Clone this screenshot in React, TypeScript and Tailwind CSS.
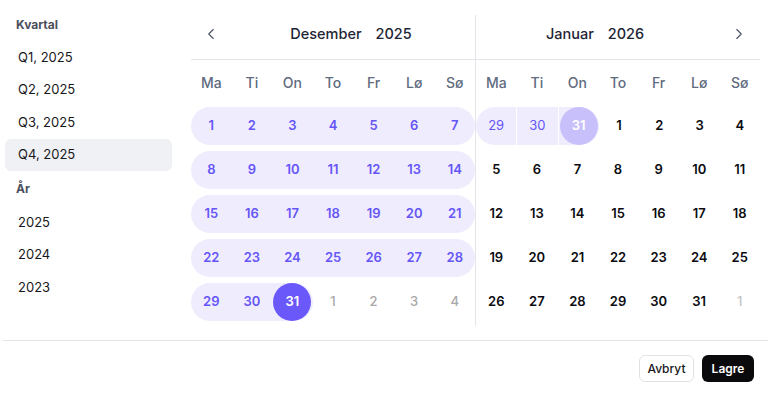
import React from 'react';
import { ChevronLeft, ChevronRight } from 'lucide-react';

const weekdays = ['Ma', 'Ti', 'On', 'To', 'Fr', 'Lø', 'Sø'];

type Day = {
  n: number;
  kind: 'range' | 'end' | 'outsideRange' | 'outsideEnd' | 'normal' | 'muted';
  start?: boolean; // left edge of pill
  stop?: boolean; // right edge of pill
};

// Desember 2025 — selection 1..31
const decDays: Day[][] = (() => {
  const rows: Day[][] = [];
  let d = 1;
  for (let r = 0; r < 4; r++) {
    const row: Day[] = [];
    for (let c = 0; c < 7; c++) {
      row.push({ n: d++, kind: 'range', start: c === 0, stop: c === 6 });
    }
    rows.push(row);
  }
  rows.push([
    { n: 29, kind: 'range', start: true },
    { n: 30, kind: 'range' },
    { n: 31, kind: 'end' },
    { n: 1, kind: 'muted' },
    { n: 2, kind: 'muted' },
    { n: 3, kind: 'muted' },
    { n: 4, kind: 'muted' },
  ]);
  return rows;
})();

// Januar 2026
const janDays: Day[][] = (() => {
  const rows: Day[][] = [];
  rows.push([
    { n: 29, kind: 'outsideRange', start: true },
    { n: 30, kind: 'outsideRange' },
    { n: 31, kind: 'outsideEnd' },
    { n: 1, kind: 'normal' },
    { n: 2, kind: 'normal' },
    { n: 3, kind: 'normal' },
    { n: 4, kind: 'normal' },
  ]);
  let d = 5;
  for (let r = 0; r < 4; r++) {
    const row: Day[] = [];
    for (let c = 0; c < 7; c++) {
      if (d > 31) {
        row.push({ n: 1, kind: 'muted' });
        d++;
      } else {
        row.push({ n: d++, kind: 'normal' });
      }
    }
    rows.push(row);
  }
  return rows;
})();

function DayCell({ day, lightMuted }: { day: Day; lightMuted?: boolean }) {
  const base = 'flex-1 h-[38px] my-[3px] flex items-center justify-center text-[13px]';

  if (day.kind === 'range' || day.kind === 'outsideRange') {
    const round = `${day.start ? 'rounded-l-full' : ''} ${day.stop ? 'rounded-r-full' : ''}`;
    const weight = day.kind === 'range' ? 'font-semibold' : 'font-normal';
    const gap = day.kind === 'outsideRange' ? 'border-r border-white' : '';
    return (
      <div className={`${base} ${round} ${weight} ${gap} bg-[#efedfd] text-[#6555f7]`}>{day.n}</div>
    );
  }
  if (day.kind === 'end' || day.kind === 'outsideEnd') {
    const circle = day.kind === 'end' ? 'bg-[#6b58fa]' : 'bg-[#c7c0fb]';
    return (
      <div className={`${base} rounded-r-full bg-[#efedfd]`}>
        <div className={`w-[38px] h-[38px] rounded-full ${circle} text-white font-semibold flex items-center justify-center`}>
          {day.n}
        </div>
      </div>
    );
  }
  if (day.kind === 'muted') {
    return (
      <div className={`${base} font-medium ${lightMuted ? 'text-[#c4c4c4]' : 'text-[#a8a8a8]'}`}>{day.n}</div>
    );
  }
  return <div className={`${base} font-semibold text-[#0b0b0f]`}>{day.n}</div>;
}

function Month({
  title,
  year,
  rows,
  side,
  lightMuted,
}: {
  title: string;
  year: string;
  rows: Day[][];
  side: 'left' | 'right';
  lightMuted?: boolean;
}) {
  return (
    <div className="w-[284px] flex flex-col">
      <div className="h-[45px] pb-[6px] flex items-center border-b border-[#e4e4ea] text-[#1e2535]">
        {side === 'left' && (
          <div className="w-[40px] flex justify-center text-[#4b5563]">
            <ChevronLeft size={18} strokeWidth={1.5} />
          </div>
        )}
        <div
          className={`flex-1 flex justify-center gap-[14px] text-[14.5px] font-medium ${
            side === 'left' ? 'pr-[4px]' : 'pr-[4px]'
          }`}
        >
          <span>{title}</span>
          <span>{year}</span>
        </div>
        {side === 'right' && (
          <div className="w-[42px] flex justify-center text-[#4b5563]">
            <ChevronRight size={18} strokeWidth={1.5} />
          </div>
        )}
      </div>
      <div className="h-[44px] flex items-center">
        {weekdays.map((w) => (
          <div key={w} className="flex-1 text-center text-[14px] font-medium text-[#5f6b7f]">
            {w}
          </div>
        ))}
      </div>
      {rows.map((row, i) => (
        <div key={i} className="h-[44px] flex">
          {row.map((d, j) => (
            <DayCell key={j} day={d} lightMuted={lightMuted} />
          ))}
        </div>
      ))}
    </div>
  );
}

function SideItem({ label, active }: { label: string; active?: boolean }) {
  return (
    <div
      className={`h-[32.5px] flex items-center pl-[13px] rounded-md text-[13px] text-[#18181b] ${
        active ? 'bg-[#f0f1f5]' : ''
      }`}
    >
      {label}
    </div>
  );
}

export default function App() {
  return (
    <div className="w-[768px] h-[394px] bg-white flex flex-col" style={{ fontFamily: 'Inter, "Noto Sans", sans-serif' }}>
      <div className="h-[340px] flex">
        <div className="w-[191px] pl-[5px] pr-[19px] pt-[8px]">
          <div className="h-[33px] flex items-center pl-[11px] text-[12px] font-bold text-[#4a4f5c]">Kvartal</div>
          <SideItem label="Q1, 2025" />
          <SideItem label="Q2, 2025" />
          <SideItem label="Q3, 2025" />
          <SideItem label="Q4, 2025" active />
          <div className="h-[35px] flex items-center pl-[11px] text-[12px] font-bold text-[#4a4f5c]">År</div>
          <SideItem label="2025" />
          <SideItem label="2024" />
          <SideItem label="2023" />
        </div>
        <div className="pt-[15px] flex">
          <div className="h-[311px] border-r border-[#e4e4ea]">
            <Month title="Desember" year="2025" rows={decDays} side="left" />
          </div>
          <div className="h-[311px]">
            <Month title="Januar" year="2026" rows={janDays} side="right" lightMuted />
          </div>
        </div>
      </div>
      <div className="ml-[3px] border-t border-[#e4e4ea] pt-[14px] pr-[14px] flex justify-end gap-[8px]">
        <button className="h-[27px] w-[55px] rounded-md border border-[#e2e2e6] bg-white text-[12px] font-medium text-[#18181b]">
          Avbryt
        </button>
        <button className="h-[27px] w-[52px] rounded-md bg-[#0a0a0c] text-[12px] font-semibold text-white">
          Lagre
        </button>
      </div>
    </div>
  );
}
